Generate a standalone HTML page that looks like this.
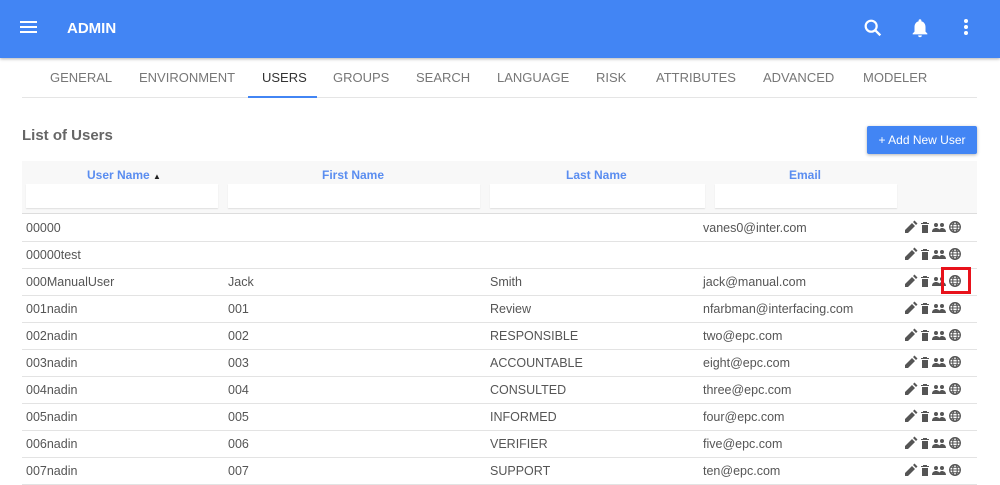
<!DOCTYPE html><html><head><style>
body{margin:0;width:1000px;height:485px;overflow:hidden;font-family:"Liberation Sans",sans-serif;background:#fff;position:relative}
.a{position:absolute}
.hdr{left:0;top:0;width:1000px;height:58px;background:#4285f4;box-shadow:0 1px 3px rgba(0,0,0,.3)}
.tab{top:70px;font-size:13px;color:#777}
.row{left:22px;width:955px;height:27px;border-bottom:1px solid #e3e3e3}
.row span{position:absolute;top:7px;font-size:12.5px;color:#555}
.hd{top:168px;font-size:12px;color:#5a8df0;font-weight:bold}
.inp{top:184px;height:24px;background:#fff;box-shadow:0 1px 1px rgba(0,0,0,.1)}
</style></head><body>
<div class="a hdr">
<div class="a" style="left:20px;top:21px;width:17px;height:2px;background:#fff;box-shadow:0 5px 0 #fff,0 10px 0 #fff"></div>
<div class="a" style="left:67px;top:20px;color:#fff;font-weight:bold;font-size:15px">ADMIN</div>
<svg class="a" style="left:862px;top:17px" width="22" height="22" viewBox="0 0 24 24"><circle cx="10" cy="10" r="6" stroke="#fff" stroke-width="2.4" fill="none"/><path d="M14.5 14.5L20 20" stroke="#fff" stroke-width="2.6"/></svg>
<svg class="a" style="left:909px;top:16px" width="22" height="24" viewBox="0 0 24 24"><path d="M12 22a2 2 0 0 0 2-2h-4a2 2 0 0 0 2 2zm6-6v-5c0-3-1.6-5.6-4.5-6.3V4a1.5 1.5 0 0 0-3 0v.7C7.6 5.4 6 8 6 11v5l-2 2v1h16v-1z" fill="#fff"/></svg>
<div class="a" style="left:964px;top:19px;width:4px;height:4px;border-radius:2px;background:#fff;box-shadow:0 6px 0 #fff,0 12px 0 #fff"></div>
</div>
<div class="a tab" style="left:50px">GENERAL</div>
<div class="a tab" style="left:139px">ENVIRONMENT</div>
<div class="a tab" style="left:262px;color:#333">USERS</div>
<div class="a tab" style="left:333px">GROUPS</div>
<div class="a tab" style="left:416px">SEARCH</div>
<div class="a tab" style="left:497px">LANGUAGE</div>
<div class="a tab" style="left:596px">RISK</div>
<div class="a tab" style="left:656px">ATTRIBUTES</div>
<div class="a tab" style="left:763px">ADVANCED</div>
<div class="a tab" style="left:863px">MODELER</div>
<div class="a" style="left:22px;top:97px;width:955px;height:1px;background:#e5e5e5"></div>
<div class="a" style="left:248px;top:96px;width:69px;height:2px;background:#4285f4"></div>
<div class="a" style="left:22px;top:127px;font-size:15px;font-weight:bold;color:#666">List of Users</div>
<div class="a" style="left:867px;top:126px;width:110px;height:28px;background:#4285f4;border-radius:2px;box-shadow:0 1px 3px rgba(0,0,0,.3);color:#fff;font-size:12px;line-height:28px;text-align:center">+ Add New User</div>
<div class="a" style="left:22px;top:161px;width:955px;height:52px;background:#f8f8f8;border-bottom:1px solid #ddd"></div>
<div class="a hd" style="left:87px">User Name <span style="font-size:8px;color:#222">▲</span></div>
<div class="a hd" style="left:322px">First Name</div>
<div class="a hd" style="left:566px">Last Name</div>
<div class="a hd" style="left:789px">Email</div>
<div class="a inp" style="left:26px;width:192px"></div>
<div class="a inp" style="left:228px;width:252px"></div>
<div class="a inp" style="left:490px;width:215px"></div>
<div class="a inp" style="left:715px;width:182px"></div>
<div id="rows"></div>
<div class="a" style="left:941px;top:267px;width:24px;height:21px;border:3px solid #e8121b"></div>
<script>
var d=[["00000","","","vanes0@inter.com"],["00000test","","",""],["000ManualUser","Jack","Smith","jack@manual.com"],["001nadin","001","Review","nfarbman@interfacing.com"],["002nadin","002","RESPONSIBLE","two@epc.com"],["003nadin","003","ACCOUNTABLE","eight@epc.com"],["004nadin","004","CONSULTED","three@epc.com"],["005nadin","005","INFORMED","four@epc.com"],["006nadin","006","VERIFIER","five@epc.com"],["007nadin","007","SUPPORT","ten@epc.com"]];
var ic='<svg style="position:absolute;left:882px;top:6px" width="60" height="14" viewBox="0 0 60 14"><path d="M1 13l0-3 7-7 3 3-7 7zM9 2l1.5-1.5 3 3L12 5z" fill="#555"/><path d="M17 3h8v1h-8zM19 2h4v1h-4zM18 5h6v8h-6z" fill="#555"/><circle cx="32" cy="5" r="2" fill="#555"/><circle cx="38" cy="5" r="2" fill="#555"/><path d="M28 12c0-3 2-4 4-4s4 1 4 4zM35 12c0-3 1.5-4 3-4s4 1 4 4z" fill="#555"/><circle cx="51" cy="7" r="5.3" stroke="#555" stroke-width="1.3" fill="none"/><ellipse cx="51" cy="7" rx="2.3" ry="5.3" stroke="#555" stroke-width="1.1" fill="none"/><path d="M45.7 7h10.6M46.5 4.3h9M46.5 9.7h9" stroke="#555" stroke-width="1"/></svg>';
var h='';d.forEach(function(r,i){h+='<div class="a row" style="top:'+(214+i*27)+'px"><span style="left:4px">'+r[0]+'</span><span style="left:206px">'+r[1]+'</span><span style="left:468px">'+r[2]+'</span><span style="left:681px">'+r[3]+'</span>'+ic+'</div>'});
document.getElementById('rows').innerHTML=h;
</script>
</body></html>
